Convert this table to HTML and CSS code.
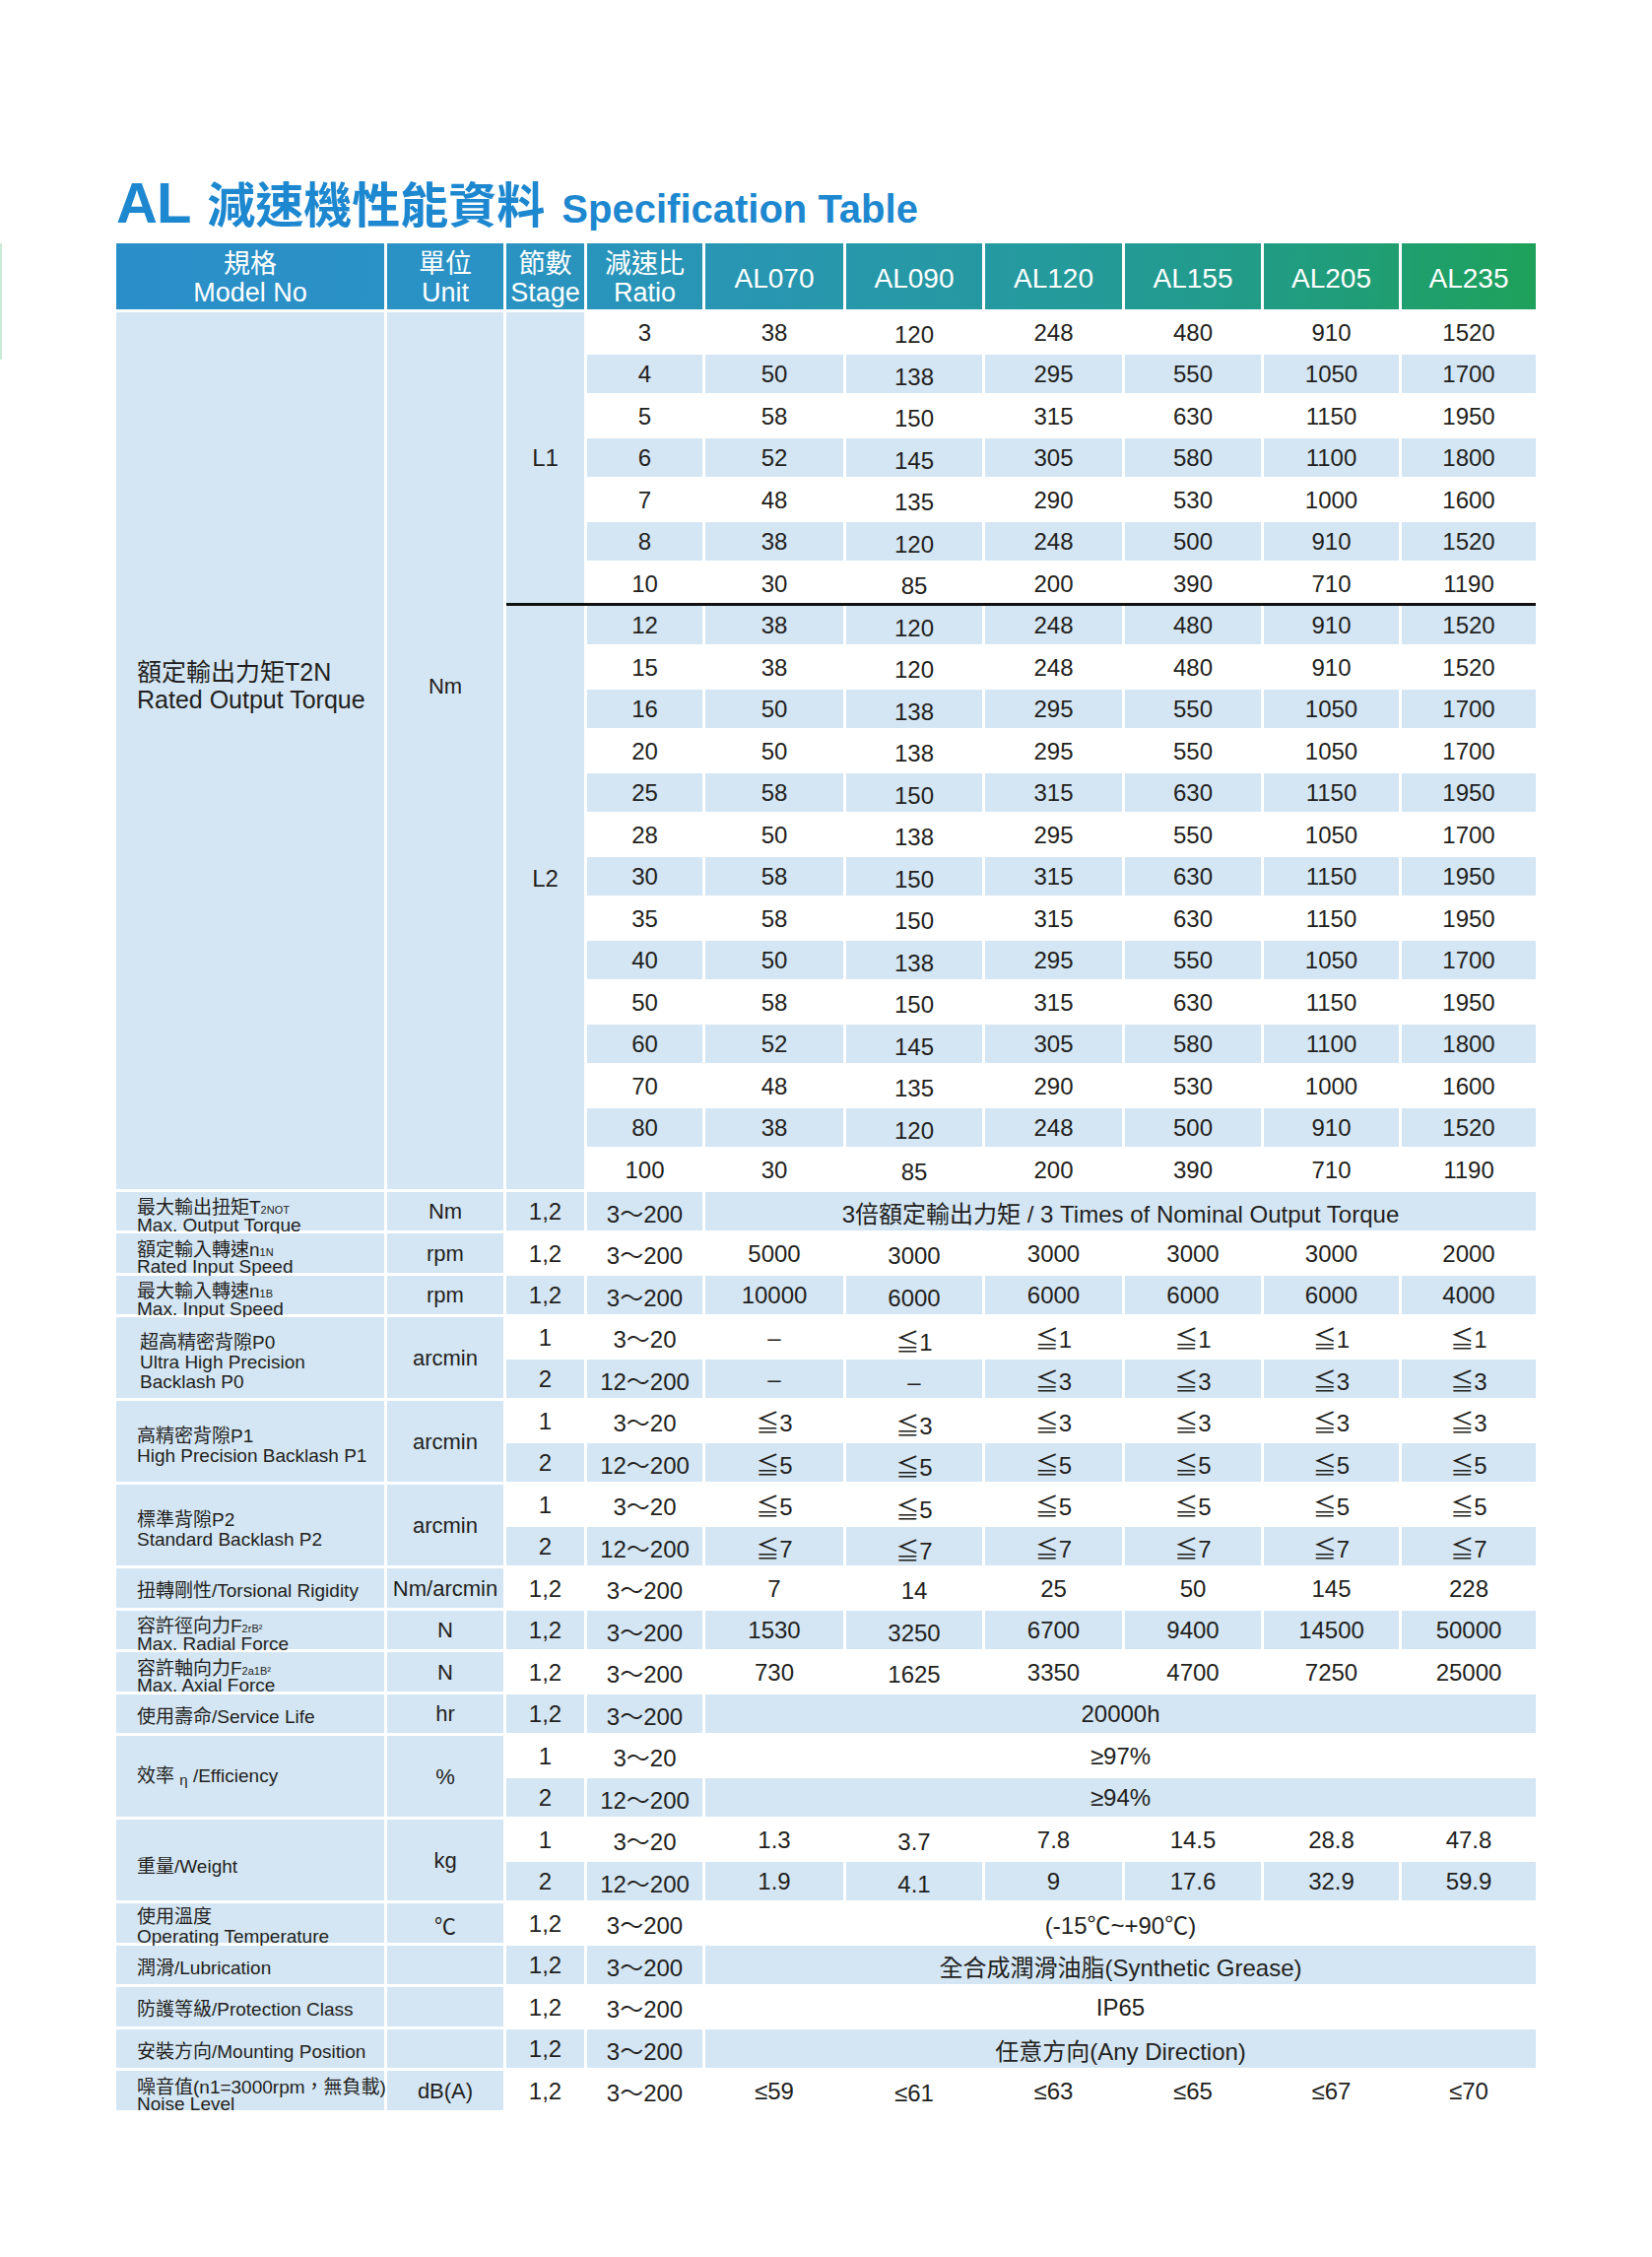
FILE: index.html
```html
<!DOCTYPE html>
<html lang="zh-Hant">
<head>
<meta charset="utf-8">
<title>AL 減速機性能資料 Specification Table</title>
<link rel="stylesheet" href="styles.css">
</head>
<body>
<div class="page">
  <div class="edge"></div>
  <main class="sheet">
    <h1 class="title"><span class="t-al">AL</span><span class="t-zh">減速機性能資料</span><span class="t-en">Specification Table</span></h1>

    <div class="head">
      <div class="h"><span>規格</span><span>Model No</span></div>
      <div class="h"><span>單位</span><span>Unit</span></div>
      <div class="h"><span>節數</span><span>Stage</span></div>
      <div class="h"><span>減速比</span><span>Ratio</span></div>
      <div class="h m">AL070</div>
      <div class="h m">AL090</div>
      <div class="h m">AL120</div>
      <div class="h m">AL155</div>
      <div class="h m">AL205</div>
      <div class="h m">AL235</div>
    </div>

    <div class="torque">
      <div class="lbl big"><div class="tx"><span class="ln">額定輸出力矩T2N</span><span class="ln">Rated Output Torque</span></div></div>
      <div class="unit tall">Nm</div>
      <div class="stages">
        <div class="grp">
          <div class="stage">L1</div>
          <div class="row"><div class="c">3</div><div class="c">38</div><div class="c lo">120</div><div class="c">248</div><div class="c">480</div><div class="c">910</div><div class="c">1520</div></div>
          <div class="row b"><div class="c">4</div><div class="c">50</div><div class="c lo">138</div><div class="c">295</div><div class="c">550</div><div class="c">1050</div><div class="c">1700</div></div>
          <div class="row"><div class="c">5</div><div class="c">58</div><div class="c lo">150</div><div class="c">315</div><div class="c">630</div><div class="c">1150</div><div class="c">1950</div></div>
          <div class="row b"><div class="c">6</div><div class="c">52</div><div class="c lo">145</div><div class="c">305</div><div class="c">580</div><div class="c">1100</div><div class="c">1800</div></div>
          <div class="row"><div class="c">7</div><div class="c">48</div><div class="c lo">135</div><div class="c">290</div><div class="c">530</div><div class="c">1000</div><div class="c">1600</div></div>
          <div class="row b"><div class="c">8</div><div class="c">38</div><div class="c lo">120</div><div class="c">248</div><div class="c">500</div><div class="c">910</div><div class="c">1520</div></div>
          <div class="row"><div class="c">10</div><div class="c">30</div><div class="c lo">85</div><div class="c">200</div><div class="c">390</div><div class="c">710</div><div class="c">1190</div></div>
        </div>
        <div class="divider"></div>
        <div class="grp">
          <div class="stage s14">L2</div>
          <div class="row b"><div class="c">12</div><div class="c">38</div><div class="c lo">120</div><div class="c">248</div><div class="c">480</div><div class="c">910</div><div class="c">1520</div></div>
          <div class="row"><div class="c">15</div><div class="c">38</div><div class="c lo">120</div><div class="c">248</div><div class="c">480</div><div class="c">910</div><div class="c">1520</div></div>
          <div class="row b"><div class="c">16</div><div class="c">50</div><div class="c lo">138</div><div class="c">295</div><div class="c">550</div><div class="c">1050</div><div class="c">1700</div></div>
          <div class="row"><div class="c">20</div><div class="c">50</div><div class="c lo">138</div><div class="c">295</div><div class="c">550</div><div class="c">1050</div><div class="c">1700</div></div>
          <div class="row b"><div class="c">25</div><div class="c">58</div><div class="c lo">150</div><div class="c">315</div><div class="c">630</div><div class="c">1150</div><div class="c">1950</div></div>
          <div class="row"><div class="c">28</div><div class="c">50</div><div class="c lo">138</div><div class="c">295</div><div class="c">550</div><div class="c">1050</div><div class="c">1700</div></div>
          <div class="row b"><div class="c">30</div><div class="c">58</div><div class="c lo">150</div><div class="c">315</div><div class="c">630</div><div class="c">1150</div><div class="c">1950</div></div>
          <div class="row"><div class="c">35</div><div class="c">58</div><div class="c lo">150</div><div class="c">315</div><div class="c">630</div><div class="c">1150</div><div class="c">1950</div></div>
          <div class="row b"><div class="c">40</div><div class="c">50</div><div class="c lo">138</div><div class="c">295</div><div class="c">550</div><div class="c">1050</div><div class="c">1700</div></div>
          <div class="row"><div class="c">50</div><div class="c">58</div><div class="c lo">150</div><div class="c">315</div><div class="c">630</div><div class="c">1150</div><div class="c">1950</div></div>
          <div class="row b"><div class="c">60</div><div class="c">52</div><div class="c lo">145</div><div class="c">305</div><div class="c">580</div><div class="c">1100</div><div class="c">1800</div></div>
          <div class="row"><div class="c">70</div><div class="c">48</div><div class="c lo">135</div><div class="c">290</div><div class="c">530</div><div class="c">1000</div><div class="c">1600</div></div>
          <div class="row b"><div class="c">80</div><div class="c">38</div><div class="c lo">120</div><div class="c">248</div><div class="c">500</div><div class="c">910</div><div class="c">1520</div></div>
          <div class="row"><div class="c">100</div><div class="c">30</div><div class="c lo">85</div><div class="c">200</div><div class="c">390</div><div class="c">710</div><div class="c">1190</div></div>
        </div>
      </div>
    </div>

    <div class="lower">
      <div class="row b">
        <div class="lbl two"><div class="tx"><span class="ln">最大輸出扭矩T<small>2NOT</small></span><span class="ln">Max. Output Torque</span></div></div>
        <div class="unit">Nm</div>
        <div class="c">1,2</div><div class="c">3～200</div>
        <div class="c w6">3倍額定輸出力矩 / 3 Times of Nominal Output Torque</div>
      </div>
      <div class="row">
        <div class="lbl two"><div class="tx"><span class="ln">額定輸入轉速n<small>1N</small></span><span class="ln">Rated Input Speed</span></div></div>
        <div class="unit">rpm</div>
        <div class="c">1,2</div><div class="c">3～200</div>
        <div class="c">5000</div><div class="c lo">3000</div><div class="c">3000</div><div class="c">3000</div><div class="c">3000</div><div class="c">2000</div>
      </div>
      <div class="row b">
        <div class="lbl two"><div class="tx"><span class="ln">最大輸入轉速n<small>1B</small></span><span class="ln">Max. Input Speed</span></div></div>
        <div class="unit">rpm</div>
        <div class="c">1,2</div><div class="c">3～200</div>
        <div class="c">10000</div><div class="c lo">6000</div><div class="c">6000</div><div class="c">6000</div><div class="c">6000</div><div class="c">4000</div>
      </div>

      <div class="row">
        <div class="lbl r2 l3 ind"><div class="tx"><span class="ln">超高精密背隙P0</span><span class="ln">Ultra High Precision</span><span class="ln">Backlash P0</span></div></div>
        <div class="unit r2">arcmin</div>
        <div class="c">1</div><div class="c">3～20</div>
        <div class="c">–</div><div class="c lo">≦1</div><div class="c">≦1</div><div class="c">≦1</div><div class="c">≦1</div><div class="c">≦1</div>
      </div>
      <div class="row b">
        <div class="c">2</div><div class="c">12～200</div>
        <div class="c">–</div><div class="c lo">–</div><div class="c">≦3</div><div class="c">≦3</div><div class="c">≦3</div><div class="c">≦3</div>
      </div>

      <div class="row">
        <div class="lbl r2 l3"><div class="tx"><span class="ln">高精密背隙P1</span><span class="ln">High Precision Backlash P1</span></div></div>
        <div class="unit r2">arcmin</div>
        <div class="c">1</div><div class="c">3～20</div>
        <div class="c">≦3</div><div class="c lo">≦3</div><div class="c">≦3</div><div class="c">≦3</div><div class="c">≦3</div><div class="c">≦3</div>
      </div>
      <div class="row b">
        <div class="c">2</div><div class="c">12～200</div>
        <div class="c">≦5</div><div class="c lo">≦5</div><div class="c">≦5</div><div class="c">≦5</div><div class="c">≦5</div><div class="c">≦5</div>
      </div>

      <div class="row">
        <div class="lbl r2 l3"><div class="tx"><span class="ln">標準背隙P2</span><span class="ln">Standard Backlash P2</span></div></div>
        <div class="unit r2">arcmin</div>
        <div class="c">1</div><div class="c">3～20</div>
        <div class="c">≦5</div><div class="c lo">≦5</div><div class="c">≦5</div><div class="c">≦5</div><div class="c">≦5</div><div class="c">≦5</div>
      </div>
      <div class="row b">
        <div class="c">2</div><div class="c">12～200</div>
        <div class="c">≦7</div><div class="c lo">≦7</div><div class="c">≦7</div><div class="c">≦7</div><div class="c">≦7</div><div class="c">≦7</div>
      </div>

      <div class="row">
        <div class="lbl"><div class="tx"><span class="ln">扭轉剛性/Torsional Rigidity</span></div></div>
        <div class="unit">Nm/arcmin</div>
        <div class="c">1,2</div><div class="c">3～200</div>
        <div class="c">7</div><div class="c lo">14</div><div class="c">25</div><div class="c">50</div><div class="c">145</div><div class="c">228</div>
      </div>
      <div class="row b">
        <div class="lbl two"><div class="tx"><span class="ln">容許徑向力F<small>2rB²</small></span><span class="ln">Max. Radial Force</span></div></div>
        <div class="unit">N</div>
        <div class="c">1,2</div><div class="c">3～200</div>
        <div class="c">1530</div><div class="c lo">3250</div><div class="c">6700</div><div class="c">9400</div><div class="c">14500</div><div class="c">50000</div>
      </div>
      <div class="row">
        <div class="lbl two"><div class="tx"><span class="ln">容許軸向力F<small>2a1B²</small></span><span class="ln">Max. Axial Force</span></div></div>
        <div class="unit">N</div>
        <div class="c">1,2</div><div class="c">3～200</div>
        <div class="c">730</div><div class="c lo">1625</div><div class="c">3350</div><div class="c">4700</div><div class="c">7250</div><div class="c">25000</div>
      </div>
      <div class="row b">
        <div class="lbl"><div class="tx"><span class="ln">使用壽命/Service Life</span></div></div>
        <div class="unit">hr</div>
        <div class="c">1,2</div><div class="c">3～200</div>
        <div class="c w6">20000h</div>
      </div>

      <div class="row">
        <div class="lbl r2 up"><div class="tx"><span class="ln">效率 <small class="eta">η</small> /Efficiency</span></div></div>
        <div class="unit r2">%</div>
        <div class="c">1</div><div class="c">3～20</div>
        <div class="c w6">≥97%</div>
      </div>
      <div class="row b">
        <div class="c">2</div><div class="c">12～200</div>
        <div class="c w6">≥94%</div>
      </div>

      <div class="row">
        <div class="lbl r2 dn"><div class="tx"><span class="ln">重量/Weight</span></div></div>
        <div class="unit r2">kg</div>
        <div class="c">1</div><div class="c">3～20</div>
        <div class="c">1.3</div><div class="c lo">3.7</div><div class="c">7.8</div><div class="c">14.5</div><div class="c">28.8</div><div class="c">47.8</div>
      </div>
      <div class="row b">
        <div class="c">2</div><div class="c">12～200</div>
        <div class="c">1.9</div><div class="c lo">4.1</div><div class="c">9</div><div class="c">17.6</div><div class="c">32.9</div><div class="c">59.9</div>
      </div>

      <div class="row">
        <div class="lbl two l3"><div class="tx"><span class="ln">使用溫度</span><span class="ln">Operating Temperature</span></div></div>
        <div class="unit">℃</div>
        <div class="c">1,2</div><div class="c">3～200</div>
        <div class="c w6">(-15℃~+90℃)</div>
      </div>
      <div class="row b">
        <div class="lbl"><div class="tx"><span class="ln">潤滑/Lubrication</span></div></div>
        <div class="unit"></div>
        <div class="c">1,2</div><div class="c">3～200</div>
        <div class="c w6">全合成潤滑油脂(Synthetic Grease)</div>
      </div>
      <div class="row">
        <div class="lbl"><div class="tx"><span class="ln">防護等級/Protection Class</span></div></div>
        <div class="unit"></div>
        <div class="c">1,2</div><div class="c">3～200</div>
        <div class="c w6">IP65</div>
      </div>
      <div class="row b">
        <div class="lbl"><div class="tx"><span class="ln">安裝方向/Mounting Position</span></div></div>
        <div class="unit"></div>
        <div class="c">1,2</div><div class="c">3～200</div>
        <div class="c w6">任意方向(Any Direction)</div>
      </div>
      <div class="row">
        <div class="lbl two"><div class="tx"><span class="ln">噪音值(n1=3000rpm，無負載)</span><span class="ln">Noise Level</span></div></div>
        <div class="unit">dB(A)</div>
        <div class="c">1,2</div><div class="c">3～200</div>
        <div class="c">≤59</div><div class="c lo">≤61</div><div class="c">≤63</div><div class="c">≤65</div><div class="c">≤67</div><div class="c">≤70</div>
      </div>
    </div>
  </main>
</div>
</body>
</html>
```

FILE: styles.css
```css
:root {
  --c1: 272px;
  --c2: 118px;
  --c3: 79px;
  --c4: 117px;
  --c5: 140px;
  --c6: 138px;
  --c7: 139px;
  --c8: 138px;
  --c9: 137px;
  --c10: 136px;
  --row: 39.5px;
  --gap: 3px;
  --blue: #d4e6f4;
  --ink: #231f20;
  --sans: "Liberation Sans", Arial, "Noto Sans CJK TC", sans-serif;
  --cjk: "Noto Sans CJK TC", "Noto Sans CJK SC", sans-serif;
}

html, body {
  margin: 0;
  background: #fff;
}

body {
  color: var(--ink);
  font-family: var(--sans);
}

.page {
  display: flex;
  align-items: flex-start;
}

.edge {
  flex: none;
  width: 2px;
  height: 118px;
  margin-top: 247px;
  background: #c9ebd8;
}

.sheet {
  flex: none;
  width: 1441px;
  padding: 177px 0 120px 116px;
}

/* title */
.title {
  display: flex;
  align-items: baseline;
  height: 58px;
  margin: 0 0 12px;
  color: #1d87cf;
  font-weight: 700;
}

.t-al {
  font-size: 58px;
  line-height: 58px;
  letter-spacing: -1px;
}

.t-zh {
  font-family: var(--cjk);
  font-size: 49px;
  line-height: 50px;
  margin-left: 17px;
}

.t-en {
  font-size: 40px;
  line-height: 40px;
  margin-left: 17px;
}

/* header */
.head {
  display: grid;
  grid-template-columns:
    var(--c1)
    calc(var(--c2) + 3px)
    calc(var(--c3) + 3px)
    calc(var(--c4) + 3px)
    calc(var(--c5) + 3px)
    calc(var(--c6) + 3px)
    calc(var(--c7) + 3px)
    calc(var(--c8) + 3px)
    calc(var(--c9) + 3px)
    calc(var(--c10) + 3px);
  height: 67px;
  margin-bottom: var(--gap);
  background: linear-gradient(to right,
    #2a8fc9 0%,
    #2a92c4 25%,
    #2995b8 38%,
    #2896b0 46%,
    #2698a6 56%,
    #249a9c 66%,
    #229b8e 76%,
    #209d7a 86%,
    #1ea15a 100%);
  color: #fff;
}

.h {
  box-sizing: border-box;
  display: flex;
  flex-direction: column;
  align-items: center;
  justify-content: center;
  padding-top: 4px;
  border-left: 3px solid #fff;
  font-size: 27px;
  line-height: 29px;
  white-space: nowrap;
}

.h:first-child {
  border-left: 0;
}

.h.m {
  font-size: 28px;
}

/* torque block */
.torque {
  display: grid;
  grid-template-columns: var(--c1) var(--c2) 1fr;
  column-gap: var(--gap);
  margin-bottom: var(--gap);
}

.stages {
  display: flex;
  flex-direction: column;
}

.grp {
  display: grid;
  grid-template-columns: var(--c3) var(--c4) var(--c5) var(--c6) var(--c7) var(--c8) var(--c9) var(--c10);
  grid-auto-rows: var(--row);
  gap: var(--gap);
}

.divider {
  height: 3px;
  background: #111;
}

.stage {
  grid-row: span 7;
  display: flex;
  align-items: center;
  justify-content: center;
  padding-top: 2px;
  background: var(--blue);
  font-size: 24px;
}

.stage.s14 {
  grid-row: span 14;
  padding-bottom: 40px;
}

/* lower block */
.lower {
  display: grid;
  grid-template-columns: var(--c1) var(--c2) var(--c3) var(--c4) var(--c5) var(--c6) var(--c7) var(--c8) var(--c9) var(--c10);
  grid-auto-rows: var(--row);
  gap: var(--gap);
}

.row {
  display: contents;
}

/* cells */
.c {
  display: flex;
  align-items: center;
  justify-content: center;
  padding-top: 2px;
  background: #fff;
  font-size: 24px;
  white-space: nowrap;
}

.b > .c {
  background: var(--blue);
}

.c.lo {
  padding-top: 7px;
}

.w6 {
  grid-column: span 6;
}

.r2 {
  grid-row: span 2;
}

.lbl {
  display: flex;
  align-items: center;
  padding: 6px 0 0 21px;
  background: var(--blue);
  font-size: 19px;
  white-space: nowrap;
  --lh: 17.5px;
}

.lbl .ln {
  display: block;
  height: var(--lh);
  line-height: var(--lh);
}

.lbl.two {
  padding-top: 11px;
}

.lbl.l3 {
  --lh: 20px;
  padding-top: 9px;
}

.lbl.ind {
  padding-left: 24px;
}

.lbl.up {
  padding-top: 0;
}

.lbl.dn {
  padding-top: 14px;
}

.lbl.big {
  padding: 0 0 132px 21px;
  font-size: 25px;
  --lh: 28px;
}

.lbl small {
  font-size: 11px;
}

.lbl small.eta {
  font-size: 15px;
  position: relative;
  top: 3px;
}

.unit {
  display: flex;
  align-items: center;
  justify-content: center;
  padding-top: 2px;
  background: var(--blue);
  font-size: 22px;
  white-space: nowrap;
}

.unit.tall {
  padding-bottom: 132px;
}
```
